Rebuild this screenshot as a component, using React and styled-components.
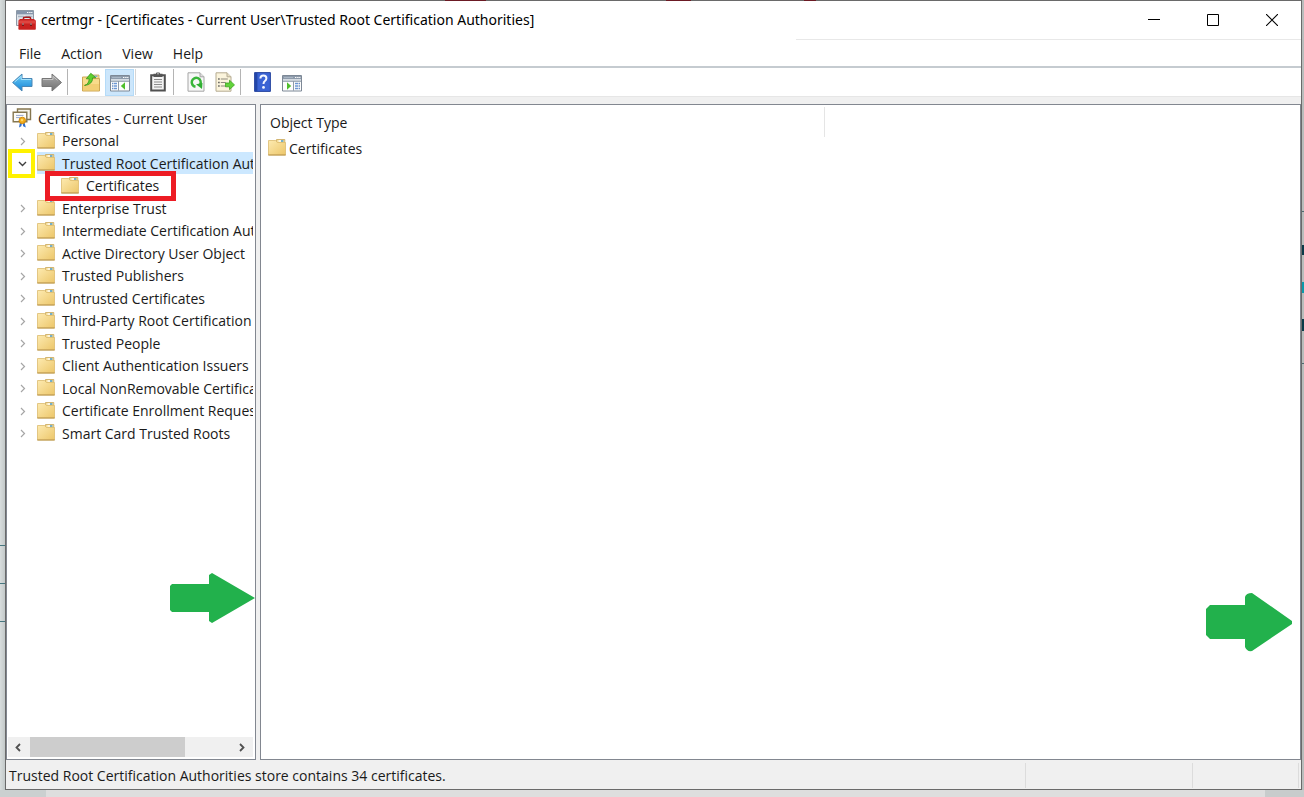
import React from 'react'
import styled, { createGlobalStyle } from 'styled-components'

const GlobalStyle = createGlobalStyle`
  * {
    box-sizing: border-box;
  }
  body {
    margin: 0;
    font-family: "Open Sans", "Noto Sans", sans-serif;
    font-size: 14px;
    color: #1a1a1a;
  }
`

const Desktop = styled.div`
  display: flex;
  height: 100vh;
  padding: 0 2px 7px 5px;
  background:
    linear-gradient(#47777f, #47777f) 0 545px / 6px 1px no-repeat,
    linear-gradient(#47777f, #47777f) 0 583px / 6px 1px no-repeat,
    linear-gradient(#47777f, #47777f) 0 621px / 6px 1px no-repeat,
    linear-gradient(#4f6a70, #4f6a70) 100% 211px / 3px 1px no-repeat,
    linear-gradient(#0b3a49, #0b3a49) 100% 245px / 3px 10px no-repeat,
    linear-gradient(#0b9aac, #0b9aac) 100% 282px / 3px 11px no-repeat,
    linear-gradient(#0b3a49, #0b3a49) 100% 319px / 3px 12px no-repeat,
    linear-gradient(#4f6a70, #4f6a70) 100% 363px / 3px 1px no-repeat,
    linear-gradient(to right, #cbd0d0 46px, #dedede 46px, #dedede calc(100% - 39px), #c8cccc calc(100% - 39px)) 0 100% / 100% 7px no-repeat,
    linear-gradient(to right, #d8dddd, #bfc5c5 6px, #b9bdbc);
`

const Window = styled.div`
  position: relative;
  flex: 1;
  min-width: 0;
  display: flex;
  flex-direction: column;
  border: 1px solid #6a6a6a;
  background: #f0f0f0;
`

const TopEdge = styled.div`
  position: absolute;
  top: -1px;
  left: ${(props) => props.$left}px;
  width: ${(props) => props.$width}px;
  height: 1px;
  background: #6b1a24;
`

const TitleBar = styled.header`
  display: flex;
  align-items: center;
  height: 39px;
  padding: 0 0 2px 10px;
  background:
    linear-gradient(to right, transparent 790px, #e8e8e8 790px) 0 100% / 100% 1px no-repeat,
    #fff;
`

const Title = styled.h1`
  flex: 1;
  margin: 0 0 0 5px;
  font-family: "Noto Sans", "Open Sans", sans-serif;
  font-size: 14px;
  font-weight: 400;
  color: #000;
  white-space: nowrap;
`

const WindowButton = styled.button`
  display: flex;
  align-items: center;
  justify-content: center;
  width: 59px;
  height: 36px;
  padding: 0;
  border: 0;
  background: none;
`

const MenuBar = styled.nav`
  display: flex;
  height: 28px;
  padding-left: 3px;
  background: #fff;
  border-bottom: 2px solid #c5cbd0;
`

const MenuItem = styled.button`
  padding: 0 10px;
  border: 0;
  background: none;
  font: inherit;
  color: inherit;
`

const ToolBar = styled.div`
  display: flex;
  align-items: center;
  height: 29px;
  padding-left: 2px;
  background: #fff;
  border-bottom: 1px solid #e6e6e6;
`

const ToolButton = styled.button`
  display: flex;
  align-items: center;
  justify-content: center;
  width: 29px;
  height: 27px;
  padding: 0;
  border: 1px solid ${(props) => (props.$on ? '#b5dbf8' : 'transparent')};
  background: ${(props) => (props.$on ? '#cce6fb' : 'none')};
`

const Separator = styled.span`
  width: 1px;
  height: 26px;
  margin: 0 ${(props) => (props.$wide ? 8 : 7)}px 0 1px;
  background: ${(props) => (props.$light ? '#d6d6d6' : '#b4b4b4')};
`

const Panes = styled.main`
  flex: 1;
  min-height: 0;
  display: flex;
  gap: 4px;
  padding-top: 7px;
`

const Pane = styled.section`
  position: relative;
  display: flex;
  flex-direction: column;
  border: 1px solid #828790;
  background: #fff;
`

const TreePane = styled(Pane)`
  width: 250px;
  padding: 2px 2px 2px 1px;
`

const ListPane = styled(Pane)`
  flex: 1;
  min-width: 0;
`

const Tree = styled.ul`
  flex: 1;
  margin: 0;
  padding: 0;
  list-style: none;
`

const TreeRow = styled.li`
  position: relative;
  display: flex;
  align-items: center;
  height: 22px;
  padding-left: ${(props) => props.$indent}px;

  &:nth-child(even) {
    height: 23px;
  }
`

const Expander = styled.button`
  display: flex;
  align-items: center;
  justify-content: center;
  flex: none;
  width: 28px;
  height: 22px;
  padding: 0;
  border: 0;
  background: none;
`

const TreeLabel = styled.span`
  flex: 1;
  min-width: 0;
  display: flex;
  align-items: center;
  gap: ${(props) => (props.$root ? 6 : 7)}px;
  height: 100%;
  overflow: hidden;
  white-space: nowrap;
  background: ${(props) => (props.$selected ? '#cce8ff' : 'none')};

  svg {
    flex: none;
    margin-bottom: ${(props) => (props.$root ? 0 : 2)}px;
  }
`

const Marker = styled.span`
  position: absolute;
  z-index: 1;
  top: -3px;
  left: ${(props) => props.$left}px;
  width: ${(props) => props.$width}px;
  height: ${(props) => props.$height}px;
  border: ${(props) => props.$thick}px solid ${(props) => props.$color};
  pointer-events: none;
`

const ScrollBar = styled.div`
  display: flex;
  height: 20px;
  background: #f0f0f0;
`

const ScrollButton = styled.button`
  display: flex;
  align-items: center;
  justify-content: center;
  width: 22px;
  padding: 0;
  border: 0;
  background: none;
`

const ScrollTrack = styled.div`
  flex: 1;
`

const ScrollThumb = styled.div`
  width: 77%;
  height: 100%;
  background: #cdcdcd;
`

const Arrow = styled.svg`
  position: absolute;
  right: ${(props) => props.$right}px;
  bottom: ${(props) => props.$bottom}px;
`

const ListTable = styled.table`
  width: 564px;
  border-collapse: collapse;
  margin-top: 2px;

  th {
    height: 30px;
    padding: 0 0 0 9px;
    border-right: 1px solid #e5e5e5;
    font-weight: 400;
    text-align: left;
  }

  td {
    height: 22px;
    padding: 0 0 0 7px;
  }
`

const Item = styled.span`
  display: flex;
  align-items: center;
  gap: 3px;

  svg {
    margin-bottom: 2px;
  }
`

const StatusBar = styled.footer`
  display: flex;
  height: 29px;
  padding: 3px 2px 1px 3px;
  line-height: 26px;
`

const StatusText = styled.span`
  flex: 1;
  border-right: 1px solid #dcdcdc;
`

const StatusCell = styled.span`
  width: ${(props) => props.$width}px;
  border-right: 1px solid #dcdcdc;
`

const FolderIcon = () => (
  <svg width="18" height="18" viewBox="0 0 18 18" aria-hidden="true">
    <defs>
      <linearGradient id="folder" x2="1" y2="1">
        <stop offset="0" stopColor="#fdeab0" />
        <stop offset="1" stopColor="#ecc669" />
      </linearGradient>
    </defs>
    <path d="M8.5 1.5h8.300V6H8.500z" fill="#f5dc94" stroke="#c9a75c" strokeWidth=".8" />
    <path d="M10.5 3H13" stroke="#fff" strokeWidth="1.4" />
    <path d="M13 3h2.400" stroke="#3e9be0" strokeWidth="1.4" />
    <path d="M.5 2.500h7.200l1.600 2h8.200V17H.5z" fill="url(#folder)" stroke="#dcbb6e" strokeWidth=".8" />
    <path d="M.3 17h17.400" stroke="#b8934a" />
  </svg>
)

const ToolboxIcon = () => (
  <svg width="20" height="20" viewBox="0 0 20 20" aria-hidden="true">
    <path d="M.5.5h17v15H.5z" fill="#dfe4ea" stroke="#8d99a7" />
    <path d="M1 1h16v3.4H1z" fill="#8696ab" />
    <path d="M11 2.5h1.4M13.2 2.5h1.4M15.2 2.5h1.2" stroke="#fff" />
    <path d="M2 6.5h6M9.5 6.5h7" stroke="#a9b4c2" strokeWidth="1.4" />
    <path d="M7.5 10V8.2q0-1 1-1h5q1 0 1 1V10" fill="none" stroke="#a51c1c" strokeWidth="1.6" />
    <path d="M2.5 10.5 4 9h14l1.8 1.800V19q0 .8-.8.8H3.2q-.8 0-.8-.8z" fill="#c9211f" />
    <path d="M3 10.5h16.500v3H3z" fill="#de4540" />
    <path d="M6 13.2h2v2.600H6zM14 13.200h2v2.600h-2z" fill="#5c1414" />
    <path d="M7 13.2v1.600M15 13.200v1.600" stroke="#f5d2d0" />
  </svg>
)

const CertificateIcon = () => (
  <svg width="20" height="20" viewBox="0 0 20 20" aria-hidden="true">
    <path d="M5.5 1h13v10.5h-13z" fill="#f7f4ea" stroke="#85764f" strokeWidth="1.4" />
    <path d="M1.2 4.2h13.6v9.6H1.2z" fill="#fdfcf7" stroke="#85764f" strokeWidth="1.4" />
    <path d="M4 7.4h7.5M4 9.6h4" stroke="#98a8cf" />
    <path d="m8 14-1 5.5 2.3-1.2.7-3zM12.4 14l1.4 5.5-2.6-1.2-.6-3z" fill="#2f6fd0" />
    <circle cx="10.3" cy="12.4" r="3.2" fill="#f3ae1c" stroke="#d28a0c" />
    <circle cx="10" cy="12" r="1.2" fill="#ffd968" />
  </svg>
)

const BackIcon = () => (
  <svg width="22" height="20" viewBox="0 0 22 20" aria-hidden="true">
    <defs>
      <linearGradient id="back" x2="0" y2="1">
        <stop offset="0" stopColor="#6fd0f8" />
        <stop offset="1" stopColor="#1583d6" />
      </linearGradient>
    </defs>
    <path d="M.6 10.5 10 2v4.500h10v8H10V19z" fill="url(#back)" stroke="#4a86b4" strokeLinejoin="round" />
    <path d="M2.6 10 9.200 4.300v3.200H19" fill="none" stroke="#a6e2fb" />
  </svg>
)

const ForwardIcon = () => (
  <svg width="22" height="20" viewBox="0 0 22 20" aria-hidden="true">
    <defs>
      <linearGradient id="forward" x2="0" y2="1">
        <stop offset="0" stopColor="#aaa" />
        <stop offset="1" stopColor="#707070" />
      </linearGradient>
    </defs>
    <path d="M20.5 10.5 11 2v4.500H1v8h10V19z" fill="url(#forward)" stroke="#777" strokeLinejoin="round" />
    <path d="M2 7.5h10V4.300l4.400 3.900" fill="none" stroke="#c4c4c4" />
  </svg>
)

const UpFolderIcon = () => (
  <svg width="20" height="20" viewBox="0 0 20 20" aria-hidden="true">
    <path d="M11 3h7v4h-7z" fill="#f5dc94" stroke="#c9a75c" strokeWidth=".8" />
    <path d="M13 4.2h3.400" stroke="#4aa0de" />
    <path d="M1.5 5h6.600l1.600 1.600h8.800V19h-17z" fill="#f8dc8b" stroke="#cda654" />
    <path d="M2 12h16v6.500H2z" fill="#eec768" opacity=".6" />
    <path d="M3.5 13.5Q8 12 8.200 6.800H5.300L9.800 1.300l5 4.500h-3.200Q11.800 12.500 3.500 13.500z" fill="#5fd02f" stroke="#35961a" strokeWidth=".8" />
  </svg>
)

const PanelIcon = ({ flip }) => (
  <svg width="20" height="20" viewBox="0 0 20 20" aria-hidden="true">
    <path d="M.5 3.5h19V19H.5z" fill="#fdfdfd" stroke="#7d8896" />
    <path d="M1 4h18v3H1z" fill="#8e9bab" />
    <path d="M2 5.5h9" stroke="#aab6c4" />
    <path d="M13 5.5h1.4M15.2 5.5h1.4M17.2 5.5h1.2" stroke="#fff" />
    <path d="M1 7h18v2H1z" fill="#d5dbe2" />
    <path d="M1 9.300h18" stroke="#8e9bab" />
    <g transform={flip ? 'matrix(-1 0 0 1 20 0)' : undefined}>
      <path d="M8.5 9v9.700" stroke="#8e9bab" />
      <path d="M2.3 11.5h1M2.3 14h1M2.3 16.5h1" stroke="#2d62b0" strokeWidth="1.3" />
      <path d="M4 11.5h3M4 14h3M4 16.5h3" stroke="#6c97d4" strokeWidth="1.3" />
      <path d="M10.8 14 15 10.2v7.600z" fill="#4fbf2b" />
    </g>
  </svg>
)

const ClipboardIcon = () => (
  <svg width="18" height="20" viewBox="0 0 18 20" aria-hidden="true">
    <path d="M2.2 3.2h13.600v15.200H2.200z" fill="#f3f3f3" stroke="#505050" strokeWidth="2" />
    <path d="M4.5 1.8h2.300L7.600.5h2.800l.8 1.300h2.300V5h-9z" fill="#555" />
    <path d="M8.2 1.8h1.600" stroke="#ddd" />
    <path d="M5 7.5h8M5 10h8M5 12.5h8M5 15h8" stroke="#8b8b8b" />
  </svg>
)

const RefreshIcon = () => (
  <svg width="18" height="20" viewBox="0 0 18 20" aria-hidden="true">
    <path d="M1 .8h12l4 4v14.400H1z" fill="#f7f7f7" stroke="#a5a5a5" />
    <path d="M13 .8v4h4" fill="#ddd" stroke="#a5a5a5" />
    <path d="M8.5 14.8A4.500 4.500 0 1 1 13.200 12.500" fill="none" stroke="#39b53a" strokeWidth="2.5" />
    <path d="m9 12.2 6.500-1.200-.5 6z" fill="#2fae32" />
  </svg>
)

const ExportIcon = () => (
  <svg width="20" height="20" viewBox="0 0 20 20" aria-hidden="true">
    <path d="M1 .8h11l4 4v14.400H1z" fill="#fbf4dc" stroke="#b5ab92" />
    <path d="M12 .8v4h4" fill="#e6dec6" stroke="#b5ab92" />
    <path d="M3.2 7h1.400M3.200 10.500h1.400M3.200 14h1.400" stroke="#4d4d4d" strokeWidth="1.4" />
    <path d="M5.8 7h7M5.800 10.500h5M5.800 14h5" stroke="#8f8a7c" strokeWidth="1.2" />
    <path d="M10.5 11h4V8.200l5 4.700-5 4.700v-2.800h-4z" fill="#62d33a" stroke="#3ba31f" strokeWidth=".8" />
  </svg>
)

const HelpIcon = () => (
  <svg width="17" height="20" viewBox="0 0 17 20" aria-hidden="true">
    <path d="M.6.6h15.800v18.800H.6z" fill="#3a63d4" stroke="#27459f" />
    <path d="M1 1h2.400v18H1z" fill="#2346a8" />
    <path d="M6.4 6.6q0-3 3-3t3 2.700q0 1.600-1.500 2.700-1.400 1-1.400 3" fill="none" stroke="#f3f6ff" strokeWidth="2" />
    <circle cx="9.5" cy="15.4" r="1.4" fill="#f3f6ff" />
  </svg>
)

const Chevron = ({ d, color, width = 1 }) => (
  <svg width="10" height="10" viewBox="0 0 10 10" fill="none" aria-hidden="true">
    <path d={d} stroke={color} strokeWidth={width} />
  </svg>
)

const RIGHT = 'M3 2 6.500 5.500 3 9'
const LEFT = 'M6 2 2.500 5.500 6 9'
const DOWN = 'M1 4 4.500 7.500 8 4'

const stores = [
  { name: 'Personal' },
  { name: 'Trusted Root Certification Authorities', open: true },
  { name: 'Certificates', leaf: true },
  { name: 'Enterprise Trust' },
  { name: 'Intermediate Certification Authorities' },
  { name: 'Active Directory User Object' },
  { name: 'Trusted Publishers' },
  { name: 'Untrusted Certificates' },
  { name: 'Third-Party Root Certification Authorities' },
  { name: 'Trusted People' },
  { name: 'Client Authentication Issuers' },
  { name: 'Local NonRemovable Certificates' },
  { name: 'Certificate Enrollment Requests' },
  { name: 'Smart Card Trusted Roots' },
]

function App() {
  return (
    <Desktop>
      <GlobalStyle />
      <Window>
        <TopEdge $left={439} $width={41} />
        <TopEdge $left={660} $width={25} />
        <TopEdge $left={798} $width={12} />
        <TitleBar>
          <ToolboxIcon />
          <Title>certmgr - [Certificates - Current User\Trusted Root Certification Authorities]</Title>
          <WindowButton aria-label="Minimize">
            <svg width="12" height="12"><path d="M0 5.5h12" stroke="#000" /></svg>
          </WindowButton>
          <WindowButton aria-label="Maximize">
            <svg width="12" height="12"><path d="M.5.5h11v11H.5z" fill="none" stroke="#000" /></svg>
          </WindowButton>
          <WindowButton aria-label="Close">
            <svg width="12" height="12"><path d="m0 0 12 12M12 0 0 12" stroke="#000" strokeWidth="1.1" /></svg>
          </WindowButton>
        </TitleBar>
        <MenuBar>
          <MenuItem>File</MenuItem>
          <MenuItem>Action</MenuItem>
          <MenuItem>View</MenuItem>
          <MenuItem>Help</MenuItem>
        </MenuBar>
        <ToolBar>
          <ToolButton aria-label="Back"><BackIcon /></ToolButton>
          <ToolButton aria-label="Forward"><ForwardIcon /></ToolButton>
          <Separator $wide />
          <ToolButton aria-label="Up one level"><UpFolderIcon /></ToolButton>
          <ToolButton aria-label="Show console tree" $on><PanelIcon /></ToolButton>
          <Separator $light />
          <ToolButton aria-label="Paste"><ClipboardIcon /></ToolButton>
          <Separator />
          <ToolButton aria-label="Refresh"><RefreshIcon /></ToolButton>
          <ToolButton aria-label="Export list"><ExportIcon /></ToolButton>
          <Separator />
          <ToolButton aria-label="Help"><HelpIcon /></ToolButton>
          <ToolButton aria-label="Show action pane"><PanelIcon flip /></ToolButton>
        </ToolBar>
        <Panes>
          <TreePane>
            <Tree>
              <TreeRow $indent={4}>
                <TreeLabel $root><CertificateIcon />Certificates - Current User</TreeLabel>
              </TreeRow>
              {stores.map((store) => (
                <TreeRow key={store.name} $indent={store.leaf ? 53 : 1}>
                  {!store.leaf && (
                    <Expander aria-label={store.open ? 'Collapse' : 'Expand'}>
                      <Chevron d={store.open ? DOWN : RIGHT} color={store.open ? '#404040' : '#a6a6a6'} width={store.open ? 1.4 : 1.2} />
                    </Expander>
                  )}
                  {store.open && <Marker $left={0} $width={27} $height={29} $thick={4} $color="#fff200" />}
                  {store.leaf && <Marker $left={37} $width={131} $height={30} $thick={5} $color="#ed1c24" />}
                  <TreeLabel $selected={store.open}><FolderIcon />{store.name}</TreeLabel>
                </TreeRow>
              ))}
            </Tree>
            <ScrollBar>
              <ScrollButton aria-label="Scroll left"><Chevron d={LEFT} color="#505050" width={1.8} /></ScrollButton>
              <ScrollTrack><ScrollThumb /></ScrollTrack>
              <ScrollButton aria-label="Scroll right"><Chevron d={RIGHT} color="#505050" width={1.8} /></ScrollButton>
            </ScrollBar>
            <Arrow $right={0} $bottom={136} width="85" height="50" viewBox="0 0 85 50" aria-hidden="true">
              <path d="M2 11h37V2l3-2 43 25-43 25-3-2v-9H2l-2-2V13z" fill="#22b14c" />
            </Arrow>
          </TreePane>
          <ListPane>
            <ListTable>
              <thead>
                <tr><th>Object Type</th></tr>
              </thead>
              <tbody>
                <tr><td><Item><FolderIcon />Certificates</Item></td></tr>
              </tbody>
            </ListTable>
            <Arrow $right={7} $bottom={107} width="87" height="60" viewBox="0 0 87 60" aria-hidden="true">
              <path d="M4 13h35V5q1-4 7-4L86 29v3L46 59q-5 1-7-4v-8H4l-4-4V17z" fill="#22b14c" />
            </Arrow>
          </ListPane>
        </Panes>
        <StatusBar>
          <StatusText>Trusted Root Certification Authorities store contains 34 certificates.</StatusText>
          <StatusCell $width={167} />
          <StatusCell $width={106} />
        </StatusBar>
      </Window>
    </Desktop>
  )
}

export default App
